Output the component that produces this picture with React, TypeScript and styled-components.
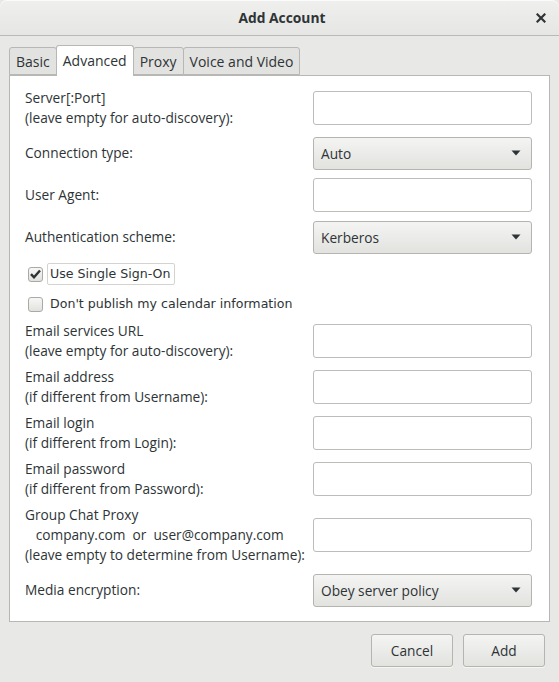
import React from 'react';
import styled, { createGlobalStyle } from 'styled-components';

const Global = createGlobalStyle`
  html, body { margin: 0; padding: 0; background: #e8e8e7; }
  body {
    font-family: "Open Sans", "Noto Sans", sans-serif;
    font-size: 13px;
    color: #2e3436;
  }
  * { box-sizing: border-box; }
`;

const Window = styled.div`
  width: 559px;
  height: 682px;
  display: flex;
  flex-direction: column;
  background: #e8e8e7;
  overflow: hidden;
`;

const TitleBar = styled.header`
  flex: none;
  height: 36px;
  display: grid;
  grid-template-columns: 1fr auto 1fr;
  align-items: center;
  padding: 0 5px 0 10px;
  background: linear-gradient(#efefee, #e6e6e4);
  border-bottom: 1px solid #b9b9b5;
  border-radius: 7px 7px 0 0;
  box-shadow: inset 0 1px #fbfbfb;
`;

const Title = styled.h1`
  grid-column: 2;
  margin: 0;
  font-size: 13.8px;
  font-weight: 700;
  color: #2e3436;
`;

const CloseButton = styled.button`
  grid-column: 3;
  justify-self: end;
  width: 26px;
  height: 26px;
  border: none;
  background: transparent;
  display: flex;
  align-items: center;
  justify-content: center;
  padding: 0;
`;

const Body = styled.main`
  flex: 1;
  display: flex;
  flex-direction: column;
  padding: 9px 9px 0 9px;
`;

const TabBar = styled.div`
  display: flex;
  align-items: flex-end;
  position: relative;
  z-index: 1;
`;

const Tab = styled.div<{ $active?: boolean }>`
  height: ${p => (p.$active ? 31 : 28)}px;
  margin-bottom: ${p => (p.$active ? -1 : 0)}px;
  margin-right: -1px;
  padding: 0 6px ${p => (p.$active ? 2 : 0)}px;
  display: flex;
  align-items: center;
  justify-content: center;
  font-size: 14px;
  border: 1px solid #b7b7b3;
  border-bottom: ${p => (p.$active ? 'none' : '1px solid #b7b7b3')};
  border-radius: 3px 3px 0 0;
  background: ${p => (p.$active ? '#ffffff' : '#e2e2e0')};
  color: #2e3436;
  position: relative;
  z-index: ${p => (p.$active ? 2 : 1)};
`;

const Panel = styled.section`
  background: #ffffff;
  border: 1px solid #b7b7b3;
  display: flex;
  flex-direction: column;
  padding: 12px 17px 14px 15px;
`;

const Row = styled.div<{ $mt?: number }>`
  display: grid;
  grid-template-columns: 288px 1fr;
  align-items: center;
  min-height: 34px;
  margin-top: ${p => p.$mt ?? 0}px;
`;

const Label = styled.div`
  font-size: 13.7px;
  line-height: 20px;
  white-space: pre;
  color: #2e3436;
`;

const Entry = styled.div`
  height: 34px;
  background: #ffffff;
  border: 1px solid #bcbcb8;
  border-radius: 3px;
`;

const Combo = styled.div`
  height: 33px;
  display: flex;
  align-items: center;
  justify-content: space-between;
  padding: 0 10px 0 7px;
  font-size: 13.7px;
  color: #2e3436;
  background: linear-gradient(#f4f4f3, #e2e2df);
  border: 1px solid #b4b4b0;
  border-radius: 3px;
  box-shadow: 0 1px rgba(255, 255, 255, 0.6);
`;

const CheckRow = styled.div<{ $mt?: number }>`
  height: 22px;
  margin-top: ${p => p.$mt ?? 0}px;
  display: flex;
  align-items: center;
  gap: 4px;
  padding-left: 3px;
`;

const Box = styled.span`
  width: 15px;
  height: 15px;
  flex: none;
  display: flex;
  align-items: center;
  justify-content: center;
  border: 1px solid #a9a9a5;
  border-radius: 3px;
  background: linear-gradient(#f7f7f6, #e1e1de);
`;

const CheckText = styled.span<{ $focus?: boolean }>`
  font-family: "DejaVu Sans", sans-serif;
  font-size: 12.6px;
  line-height: 20px;
  padding: 0 3px 0 2px;
  border: 1px solid ${p => (p.$focus ? '#d3d3d0' : 'transparent')};
  border-radius: 2px;
  color: #2e3436;
`;

const ButtonRow = styled.footer`
  display: flex;
  justify-content: flex-end;
  gap: 10px;
  margin-top: 12px;
  padding-right: 5px;
`;

const Button = styled.button`
  width: 82px;
  height: 33px;
  font-family: "Open Sans", "Noto Sans", sans-serif;
  font-size: 13.7px;
  color: #2e3436;
  background: linear-gradient(#f4f4f3, #e2e2df);
  border: 1px solid #b4b4b0;
  border-radius: 3px;
  box-shadow: 0 1px rgba(255, 255, 255, 0.6);
  padding: 0;
`;

const Arrow = () => (
  <svg width="10" height="6" viewBox="0 0 10 6">
    <path d="M0.5 0.5 H9.5 L5 5.5 Z" fill="#2e3436" />
  </svg>
);

const Check = () => (
  <svg width="11" height="10" viewBox="0 0 11 10">
    <path d="M1 5.2 L4 8.3 L10 1.5" fill="none" stroke="#2e3436" strokeWidth="2.4" strokeLinejoin="miter" />
  </svg>
);

const CloseIcon = () => (
  <svg width="10" height="10" viewBox="0 0 10 10">
    <path d="M1.5 1.5 L8.5 8.5 M8.5 1.5 L1.5 8.5" stroke="#2e3436" strokeWidth="2.2" strokeLinecap="square" />
  </svg>
);

type Field = { label: string; kind: 'entry' | 'combo'; value?: string; mt: number };

const fieldsTop: Field[] = [
  { label: 'Server[:Port]\n(leave empty for auto-discovery):', kind: 'entry', mt: 0 },
  { label: 'Connection type:', kind: 'combo', value: 'Auto', mt: 8 },
  { label: 'User Agent:', kind: 'entry', mt: 8 },
  { label: 'Authentication scheme:', kind: 'combo', value: 'Kerberos', mt: 8 },
];

const fieldsBottom: Field[] = [
  { label: 'Email services URL\n(leave empty for auto-discovery):', kind: 'entry', mt: 6 },
  { label: 'Email address\n(if different from Username):', kind: 'entry', mt: 6 },
  { label: 'Email login\n(if different from Login):', kind: 'entry', mt: 6 },
  { label: 'Email password\n(if different from Password):', kind: 'entry', mt: 6 },
  {
    label: 'Group Chat Proxy\n   company.com  or  user@company.com\n(leave empty to determine from Username):',
    kind: 'entry',
    mt: 6,
  },
  { label: 'Media encryption:', kind: 'combo', value: 'Obey server policy', mt: 8 },
];

const FieldRow = ({ f }: { f: Field }) => (
  <Row $mt={f.mt}>
    <Label>{f.label}</Label>
    {f.kind === 'entry' ? (
      <Entry />
    ) : (
      <Combo>
        <span>{f.value}</span>
        <Arrow />
      </Combo>
    )}
  </Row>
);

export default function App() {
  return (
    <>
      <Global />
      <Window>
        <TitleBar>
          <Title>Add Account</Title>
          <CloseButton aria-label="Close">
            <CloseIcon />
          </CloseButton>
        </TitleBar>
        <Body>
          <TabBar>
            <Tab>Basic</Tab>
            <Tab $active>Advanced</Tab>
            <Tab>Proxy</Tab>
            <Tab>Voice and Video</Tab>
          </TabBar>
          <Panel>
            {fieldsTop.map(f => (
              <FieldRow key={f.label} f={f} />
            ))}
            <CheckRow $mt={9}>
              <Box>
                <Check />
              </Box>
              <CheckText $focus>Use Single Sign-On</CheckText>
            </CheckRow>
            <CheckRow $mt={8}>
              <Box />
              <CheckText>Don't publish my calendar information</CheckText>
            </CheckRow>
            {fieldsBottom.map(f => (
              <FieldRow key={f.label} f={f} />
            ))}
          </Panel>
          <ButtonRow>
            <Button>Cancel</Button>
            <Button>Add</Button>
          </ButtonRow>
        </Body>
      </Window>
    </>
  );
}
